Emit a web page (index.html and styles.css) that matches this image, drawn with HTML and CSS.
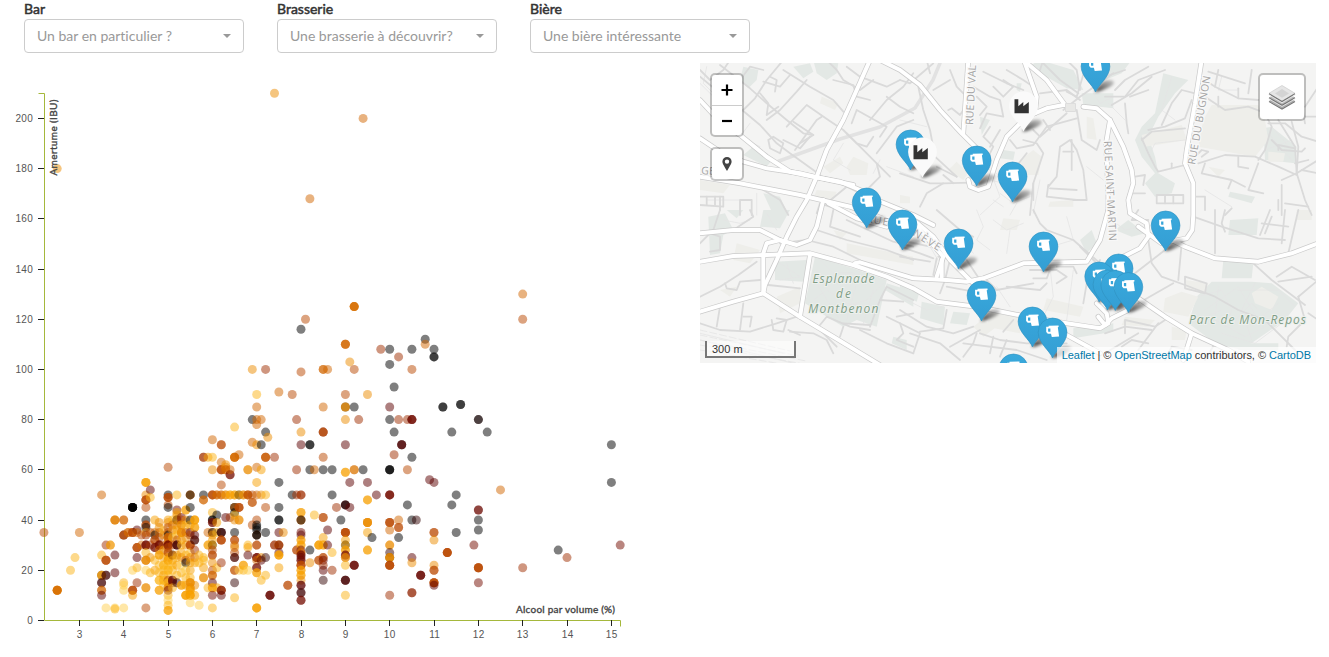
FILE: index.html
```html
<!DOCTYPE html>
<html lang="fr">
<head>
<meta charset="utf-8">
<title>Bières</title>
<link rel="stylesheet" href="styles.css">
</head>
<body>
<form class="filters">
  <div class="field"><label class="field-label">Bar</label><div class="select"><span>Un bar en particulier ?</span><i class="caret"></i></div></div>
  <div class="field"><label class="field-label">Brasserie</label><div class="select"><span>Une brasserie à découvrir?</span><i class="caret"></i></div></div>
  <div class="field"><label class="field-label">Bière</label><div class="select"><span>Une bière intéressante</span><i class="caret"></i></div></div>
</form>
<main class="content">
  <svg class="chart" id="chart" width="700" height="594" viewBox="0 63 700 594"></svg>
  <section class="map">
    <svg class="map-canvas" width="616" height="300" viewBox="700 63 616 300">
      <defs>
        <linearGradient id="pinFill" x1="0" y1="0" x2="0" y2="1"><stop offset="0" stop-color="#39a9dc"/><stop offset="1" stop-color="#349ed4"/></linearGradient>
        <linearGradient id="shade" x1="0" y1="1" x2="1" y2="0"><stop offset="0" stop-color="#000" stop-opacity=".75"/><stop offset="1" stop-color="#000" stop-opacity=".15"/></linearGradient>
        <filter id="soft" x="-40%" y="-60%" width="180%" height="220%"><feGaussianBlur stdDeviation="1.5"/></filter>
        <path id="pin" d="M0 0C-2.500-7-14.400-15-14.400-25.600A14.400 14.400 0 0 1 14.400-25.600C14.400-15 2.500-7 0 0Z"/>
        <path id="shadow" d="M-1 0C3-6 6-12 14-12C20-12 20-8 14-5C8-2 3 0-1 0Z"/>
        <g id="mug" fill="#fff"><path d="M-4-32.300L6-32.600V-31L5.200-30.800L6.500-21.400L-.8-21L-1.600-24.200L-4.800-24.300L-6.400-26V-31.300L-4-31.300ZM-4.500-29.400V-26.600L-3.800-26.200L-2.200-26.200V-29.400Z" fill-rule="evenodd"/></g>
        <path id="factory" fill="#333" d="M-9-32.300H-5.200V-25.200L-.2-29.600V-25.200L5.300-29.600V-18.200H-9Z"/>
      </defs>
      <rect x="700" y="63" width="616" height="300" fill="#f4f4f3"/>
      <g id="areas"></g>
      <g id="minor"></g>
      <g id="casing"></g>
      <g id="major"></g>
      <g class="street">
        <text transform="translate(973 125) rotate(-87)" textLength="60" lengthAdjust="spacingAndGlyphs">RUE DU VAL</text>
        <text transform="translate(1104 141) rotate(87)" textLength="100">RUE SAINT-MARTIN</text>
        <text transform="translate(1195 165) rotate(-80)" textLength="90">RUE DU BUGNON</text>
        <text transform="translate(866 222) rotate(10)" textLength="22">RUE</text>
        <text transform="translate(906 231) rotate(32)" textLength="38">ENÈVE</text>
        <text transform="translate(701 174) rotate(4)" textLength="40">GENÈVE</text>
      </g>
      <g class="place" text-anchor="middle">
        <text x="843.500" y="282.500" textLength="62">Esplanade</text><text x="843.500" y="297.500" textLength="15">de</text><text x="843.300" y="312.500" textLength="70">Montbenon</text>
        <text x="1247.500" y="323.500" textLength="117">Parc de Mon-Repos</text>
      </g>
      <g id="pins"></g>
    </svg>
    <div class="controls-left">
      <div class="bar zoom"><a><svg width="12" height="12"><path d="M6 .5v11M.5 6h11" stroke="#000" stroke-width="2.200"/></svg></a><a><svg width="12" height="12"><path d="M1 6h10" stroke="#000" stroke-width="2.200"/></svg></a></div>
      <div class="bar"><a><svg width="12" height="16"><path fill="#444" fill-rule="evenodd" d="M6 1a4.600 4.600 0 0 1 4.600 4.600c0 2-1 3.500-4.600 9.400C2.400 9.100 1.400 7.600 1.400 5.600A4.600 4.600 0 0 1 6 1zm0 2.400a2.200 2.200 0 1 0 0 4.400 2.200 2.200 0 0 0 0-4.400z"/></svg></a></div>
    </div>
    <div class="bar layers"><svg width="28" height="28"><path d="M1 18l13-7.500L27 18l-13 7.500z" fill="#aaa"/><path d="M1 14.500L14 7l13 7.500L14 22.500z" fill="#bbb"/><path d="M1 10.300L14 2.500l13 7.800-13 8z" fill="#e6e6e6" stroke="#ccc" stroke-width=".7"/><path d="M7 10.500L14 6l7 4.500-7 4.300z" fill="#d4d4d4"/><path d="M1 10.800L14 18.500l13-7.700M1 14.800L14 22.300l13-7.500M1 18.500l13 7.500 13-7.500" fill="none" stroke="#777" stroke-width="1.100"/><path d="M1 12L14 19.800 27 12M1 16l13 7.500L27 16" fill="none" stroke="#eee" stroke-width=".8"/></svg></div>
    <div class="scale">300 m</div>
    <div class="attribution"><a>Leaflet</a> | © <a>OpenStreetMap</a> contributors, © <a>CartoDB</a></div>
  </section>
</main>
<script src="app.js"></script>
</body>
</html>
```

FILE: styles.css
```css
body { margin: 0; width: 1329px; height: 657px; overflow: hidden; background: #fff; color: #333; font: 14px/20px Lato, sans-serif; font-variant-ligatures: none; }
.filters { display: flex; gap: 33px; height: 63px; padding-left: 24px; box-sizing: border-box; }
.field { width: 220px; }
.field-label { display: block; height: 19px; line-height: 18px; -webkit-text-stroke: .5px #333; }
.select { display: flex; align-items: center; justify-content: space-between; height: 34px; box-sizing: border-box; padding: 0 12px; border: 1px solid #ccc; border-radius: 4px; color: #999; }
.caret { border: 4px solid transparent; border-top-color: #999; border-bottom: 0; }
.content { display: flex; align-items: flex-start; }
.chart { display: block; flex: none; }
.chart .axis { fill: none; stroke: #a5b83b; }
.chart .tick { stroke: #222; }
.chart .tick-label { font: 10px "Liberation Sans", sans-serif; fill: #555; letter-spacing: .3px; }
.chart .title { font: 10px Lato, sans-serif; fill: #444; stroke: #444; stroke-width: .35px; }
.chart .dot { fill-opacity: .5; }
.map { position: relative; width: 616px; height: 300px; overflow: hidden; }
.map-canvas { display: block; }
.area { fill: #eeeeea; }
.area.park { fill: #e3e8e5; }
.road { fill: none; stroke-linejoin: round; stroke-linecap: round; }
.road.lane { stroke: #dadada; stroke-width: 1.8; }
.road.path { stroke: #e5e5e5; stroke-width: .8; }
.road.rail { stroke: #e2e2e2; stroke-width: 3.5; }
.road.case { stroke: #cacaca; stroke-width: 5.4; }
.road.fill { stroke: #fff; stroke-width: 4; }
.street { font: 10.5px "Open Sans", sans-serif; fill: #a4a4a4; stroke: #f8f8f8; stroke-width: 2.5px; paint-order: stroke; }
.place { font: italic 500 12px "Open Sans", sans-serif; fill: #7f9d86; stroke: #edf0ed; stroke-width: 2px; paint-order: stroke; }
.bar { width: 30px; border: 2px solid rgba(0,0,0,.22); border-radius: 5px; background: #fff; background-clip: padding-box; }
.bar a { display: flex; align-items: center; justify-content: center; height: 30px; }
.zoom a:first-child { border-bottom: 1px solid #ccc; }
.zoom a:last-child { height: 29px; }
.controls-left { position: absolute; left: 10px; top: 10px; display: flex; flex-direction: column; gap: 10px; }
.layers { position: absolute; right: 10px; top: 10px; width: 44px; height: 44px; display: flex; align-items: center; justify-content: center; }
.scale { position: absolute; left: 5px; bottom: 5px; width: 91px; height: 17px; box-sizing: border-box; padding-left: 5px; border: 2px solid #777; border-top: 0; background: rgba(255,255,255,.5); font: 11px/16px "Liberation Sans", sans-serif; }
.attribution { position: absolute; right: 0; bottom: 0; height: 16px; padding: 0 5px; background: rgba(255,255,255,.7); font: 11px/16px "Liberation Sans", sans-serif; letter-spacing: -.03px; white-space: nowrap; }
.attribution a { color: #0078a8; }
```

FILE: app.js
```js
const NS = 'http://www.w3.org/2000/svg';
function add(parent, tag, attrs, text) {
  const el = document.createElementNS(NS, tag);
  for (const k in attrs) el.setAttribute(k, attrs[k]);
  if (text !== undefined) el.textContent = text;
  parent.appendChild(el);
  return el;
}

/* Scatter plot: colour letters run from pale (Y) to black (k), a digit repeats the beer. */
const colours = { Y: '#ffd050', y: '#fbb317', a: '#f8a000', g: '#eb8c00', o: '#d16500', c: '#b94700', r: '#9f2d00', b: '#730b00', m: '#5b0000', d: '#350505', k: '#000' };
const beers = `
2.2:35c
2.5:180g 12g3 12o2
2.8:20y
2.9:25y
3:35o
3.5:50o 26y 18d 18a2 15m 15d 12o2 10m
3.6:30r 24c3 18m 18d 5Y
3.7:30y 30g
3.8:40a2 40o 26m 19m 5Y 4.5y
4:40o2 34d 34c2 15y 14Y 12Y 5Y
4.1:35o2
4.2:45k6 35c3 20Y 12c3 10a
4.3:36m 35o 29c3 25m 21y 15r
4.4:34c 30o
4.5:55a3 50g 48c3 45c 40k 38c2 37k 35g 34r 30b3 27y 24o2 24a 20Y 13g2 5c
4.6:52m 49y 35c 30r 25g 19y
4.7:40a 35o 34k 32c2 29b2 24y 20a
4.8:39g 37g 35o 33c 30b3 28o 26a2 22y 19y 16y2 12a2
4.9:36y 34g 30c 28a 25a 22y2 20y 18a 16y2 14y
5:61c 50k 49c3 46c 45k 40a 39g 37c 35c 34k 33o3 31o2 30b3 29c 27c2 25a 24a2 22y 20y2 18y 16c 15y2 13g2 12b 10y 8Y 6y 4a2
5.1:40y 38o 36g 33y 30c 26k 26o 24a 22y 20y 16m2 15b 13y
5.2:50y 44b 42g 43a 40k 40g 38g 36a 34y 32c 30m2 30d 26g 25y 22a 18y 15d
5.3:41b 40r 38g2 35g3 32a 30y 27a 25g 22Y 19y 14a2
5.4:44a2 40g 38y 35o 33g 30g 26y 24c 23k 20Y 17y 14a 10a3
5.5:50o2 50k 45k 40k 38a 35m 34c 30c3 27y 25g 23a 20a 17y 15g3 13g2 12a2 10a3 7Y
5.6:40a3 37a2 34m 32k 32b 28r 25o 23a 14g 10a
5.7:26y 23y 6Y
5.8:65b 65c 50k 48o2 25y 24y 21a 17g2
5.9:65a 35o 30a2 13y
6:72o 65y 60g 50c3 43y 40k2 39b2 35o 35k 34g 32a 30k 30a 28c 26c2 23g 20c 18o2 15m 13a2 10b 5y
6.1:50o2 42k 39a 35y 21y 13a
6.2:70c2 63o 60c3 54c 50o2 35d3 32c3 23r 12c2 12b 10m
6.3:62g 61g 60o2 50g2 41m
6.4:58b2 60o 50a2 41r
6.5:77y 65a 65o3 50a2 45k2 45o 43k 42y 40g 35k 32c2 30o 29g 27c 25k 25b 20r 20o 15d 9y
6.6:66o 50k 50a 45c3 40o 40a 20Y
6.7:50g2 22a2 20y
6.8:60o 60a 50o2 50c 30y 29a 26m 20Y
6.9:80k 71o 50c 47o 47c 38c
6.9:100g
7:90y 85o 80o 78o 70g 61o 55a 50o 40c 38k 37k 36k 34c 34k2 30c2 25b3 24o 21b2 19a2 5a3
7.1:80o 70k 60a 50g 25g 24m 16y
7.2:100r 75k 65c2 65o 50y 45c 35k 25d 18y
7.25:73g
7.3:10b2 10m
7.4:65r 30r2
7.4:210g
7.5:91o 55k 45k 40k2 35m 30o2 30b 27m 26a3 21a
7.6:35g
7.7:14c2
7.8:90c 50k
7.9:80r 60r 50r 28c2
8:116k 99c 75g 70m 50r2 43a2 40o2 40k 35b 34m 32a2 30a2 28b 27o2 26b2 25m 24b2 22c3 20a2 18a2 16g 14m2 11m 11d 8b2
8.1:120c
8.2:168o 70k2 60k 28k 23g
8.3:60o 42y
8.4:30a3 24c2
8.5:100o2 85o 75b 75c2 65c 60k 41c2 33a 30a2 25c2 24b 22r 20m 16d
8.6:100o 36m 30m
8.7:60k 50k 27y 20r
8.8:45r
8.9:40k
9:110o3 90c 85k 85g2 80g 70m 59a2 46m2 46k 35c4 32a 30k 30a 28a2 26b2 25c 25a 22y 16m2 16d 10y
9.1:103g 55m 45m
9.2:125g2 125o2 100c 85k 60c 60g 22b2 22m
9.3:80r
9.4:200o 60k
9.5:90g 55m 48a2 39g4 35a 28a2
9.6:33k
9.7:50m
9.8:108r
10:108k 102k 85m 80k 60k3 50b3 39c3 36o 30g2 27d 25k 25g3 22c4 10r
10.1:93k 75k 66r
10.2:105r 80r 40o 37c2 33k
10.27:70d2 70m
10.4:80r 60c 46k
10.5:108k 100c 80m 80b2 65k 40k 25m 23g 11b 11r
10.6:40d
10.7:18b2 18m
10.8:112k 110o
10.9:56m
11:108k 105k2 55m 35c2 32g 22g 20c2 15c4 14m
11.2:85k2
11.3:27c4
11.4:75k 46k
11.5:50k 35k
11.6:86k2
11.9:30b
12:80d 80k 44m 44b 40k 36k 21c4 15b
12.2:75k
12.5:52o
13:130o 120c 21r
13.8:28k
14:25r
15:70k 55k
15.2:30b`;
const X = v => 79.4 + (v - 3) * 44.33, Y = v => 620.4 - v * 2.51;
const chart = document.getElementById('chart');
add(chart, 'path', { class: 'axis', d: 'M38.5 93.500H44.500V620.500H620.500V626.500' });
for (let v = 0; v <= 200; v += 20) {
  const y = Math.floor(Y(v)) + .5;
  add(chart, 'path', { class: 'tick', d: `M38 ${y}h6` });
  add(chart, 'text', { class: 'tick-label', x: 33, y: y + 3.500, 'text-anchor': 'end' }, v);
}
for (let v = 3; v <= 15; v++) {
  const x = Math.floor(X(v)) + .5;
  add(chart, 'path', { class: 'tick', d: `M${x} 620v6` });
  add(chart, 'text', { class: 'tick-label', x: x + .2, y: 638, 'text-anchor': 'middle' }, v);
}
for (const line of beers.trim().split('\n')) {
  const [abv, list] = line.split(':');
  for (const m of list.matchAll(/([\d.]+)([a-zA-Z])(\d?)/g))
    for (let i = 0; i < (m[3] || 1); i++)
      add(chart, 'circle', { class: 'dot', cx: X(+abv).toFixed(1), cy: Y(+m[1]).toFixed(1), r: 4.5, fill: colours[m[2]] });
}
add(chart, 'text', { class: 'title', x: 516, y: 613, textLength: 99 }, 'Alcool par volume (%)');
add(chart, 'text', { class: 'title', transform: 'translate(57 175.500) rotate(-90)', textLength: 76 }, 'Amertume (IBU)');

/* Map tiles: geometry in thirds of a pixel from each tile's origin. */
const tiles = { A: [700, 60], B: [700, 210], C: [900, 60], D: [900, 210], E: [1105, 60], F: [1105, 210] };
function pathOf(tile, pts) {
  const [ox, oy] = tiles[tile];
  return 'M' + pts.trim().split(' ').map(p => { const [x, y] = p.split(','); return (ox + x / 3).toFixed(1) + ' ' + (oy + y / 3).toFixed(1); }).join('L');
}
function each(src, fn) { src.trim().split('\n').forEach(l => { const t = l[0]; l.slice(2).split('|').forEach(p => fn(t, p)); }); }
const parks = `
A 130,20 175,30 170,60 145,85 120,60|280,20 330,10 340,35 310,55|340,0 415,10 410,40 380,60 350,40|130,285 165,255 220,295 200,320|190,400 240,410 265,465 220,465
B 25,20 75,10 100,60 70,75 60,130 30,135|80,0 130,0 110,25|190,0 270,0 240,55 180,50|225,155 320,150 310,215 225,210|345,140 460,175 560,210 530,350 470,330 430,350 315,280|560,220 640,245 640,290 555,240|580,380 620,390 620,420 575,400
C 350,70 365,70 360,95 350,90|240,170 270,180 245,225|545,100 640,100 640,145 550,135|385,20 420,0 520,30 550,90 500,85|310,270 345,275 340,300 300,295
D 65,275 135,290 130,345 60,325|0,215 60,240 50,275 0,250|520,355 640,340 640,365 520,385|160,305 210,310 200,345 150,340|540,90 575,60 590,100 560,130
E 175,40 250,60 210,100 160,170 130,230 150,290 160,340 210,370 200,400 150,410 120,370 150,340 110,290 90,240 110,200 150,160|475,205 500,200 575,260 570,310 480,300|375,395 450,410 440,430 370,410|0,0 80,0 50,40 0,60
F 355,150 445,160 440,205 350,205|275,260 320,215 440,215 500,220 580,280 540,330 410,420 330,400 250,340|375,30 460,25 455,75 370,75|30,60 70,30 120,70 80,80|400,400 520,400 520,420 400,420`;
const blocks = `
A 365,110 415,130 405,150 360,130|370,320 420,290 430,310 390,340|440,320 460,290 505,310 500,345 450,345|350,390 410,395 400,420 340,415|0,360 90,375 70,400 0,390
B 230,260 300,230 300,280 240,310|110,100 180,120 150,160 100,150|60,240 110,230 90,260|400,60 440,70 420,90|440,100 640,140 640,165 440,130
C 360,300 400,270 425,290 415,345 360,345|145,330 170,305 205,340 190,360|450,425 520,420 520,440 445,440|560,170 580,175 590,240 560,235|0,405 30,410 30,430 0,430
D 275,300 365,325 360,370 260,350|220,350 245,330 290,350 250,380|440,265 550,290 540,320 430,300|310,25 360,30 350,60 300,60
E 295,180 320,135 460,135 480,180 490,240 450,290 280,260|110,225 230,195 245,240 120,260|490,275 540,280 535,305 490,305|310,320 360,330 340,350
F 180,265 230,245 280,260 250,320 175,305|240,210 310,220 300,250 245,240|200,350 245,360 240,390 200,390|440,250 470,230 520,260 500,300 450,280|60,320 150,330 130,350 50,345|575,0 620,0 620,30 575,30`;
const lanes = `
A 0,50 60,100 120,145 180,195 230,250 270,280 340,330 360,345|60,15 150,85 200,130 260,180 310,220 340,225|250,30 330,80 400,120 430,155|190,65 240,80 270,45|130,150 165,115 200,60 250,0|200,180 240,150 290,95 320,60|260,200 320,135 385,180 430,210 480,260 530,310 570,350|285,270 350,180 365,170|280,185 340,225 300,250|205,240 220,230 250,250 240,280 210,265 205,240|250,240 300,265 330,230|380,0 410,30 430,60 480,90 520,60|400,60 460,75 470,110 510,120|440,20 480,50 560,80 600,60|455,190 470,150 560,200 540,230|510,180 560,120 610,80 640,40|560,110 600,140 640,160|530,280 590,200 640,180|440,220 470,250 500,260 520,230|0,30 30,60 70,30 90,0|120,60 150,20 190,30|180,100 205,130 200,165 235,140|210,50 230,60 225,95|380,430 440,380 480,400|530,310 540,350 500,390|60,410 60,450|0,410 70,410 70,440 0,435|20,410 20,435|45,410 45,435|120,465 120,420 155,420 155,465|190,390 240,420 265,465|350,460 360,430 450,460
B 0,260 60,230 115,195 170,155|75,220 80,235 110,240 120,215 180,210|130,320 155,320 150,350|0,340 60,360 150,365 230,340 290,320|50,350 60,290|120,360 130,280|205,225 300,235|215,330 220,360 250,365 260,330 230,325|270,365 340,370 380,390 400,430|265,360 300,375|300,320 350,350 410,410|360,345 380,320 450,350 510,360|430,340 510,345|510,350 540,270 560,230 640,270|540,270 610,275|560,320 600,340 610,370 590,390 640,410|480,360 560,400 640,430|590,320 640,310|430,350 420,380|0,100 40,60 60,0|100,60 160,20 150,0|400,0 390,50 480,80|440,30 580,95 640,110|240,100 320,90 400,110 480,150|350,60 440,90 560,120 640,150|30,70 60,80 60,120 30,125
C 55,80 70,150 90,210 105,290 170,350|0,60 30,70 100,10|80,0 90,40|150,30 170,80 190,100|145,150 155,145 180,165 190,150|220,80 270,110 300,120 310,170 260,160 240,205|230,110 260,140 240,165|310,60 340,80 310,110 280,80|250,35 320,70 370,90|320,30 370,60 400,80|270,200 250,230 280,260 250,320|300,210 270,260|330,240 350,265 400,255 440,200 530,175|370,240 410,250 430,280 400,370 400,420|340,330 380,280|400,210 420,230 500,160|430,180 450,210|0,340 90,370 130,370|60,440 80,400 130,370 210,368|110,320 170,350|130,345 160,370|445,380 470,350 480,260 510,240 530,270 550,330 560,420 520,420|445,375 440,410 530,420|450,385 530,390|520,275 490,275|515,240 515,330|530,150 545,240 590,270 600,240|400,370 390,465|490,150 540,110 640,40|420,100 500,90 540,120|540,90 530,30 500,0|420,0 480,60 535,100|500,95 530,110 560,10|0,230 60,250|430,0 420,30|100,90 150,60
D 110,0 180,60 220,80|200,150 240,210|180,170 220,220|110,145 100,195|130,140 130,210|115,140 135,145|150,150 135,210 120,250|140,230 220,245 250,250|250,200 290,240 400,220|390,180 470,180 500,200 470,220|400,205 440,205 450,180|470,170 520,170 530,190|400,0 420,40 440,60 520,90 600,160|540,110 600,170 640,190|550,280 560,220 600,150|240,370 300,390 380,400 500,400|190,400 350,420 440,450|230,370 220,400 190,440|150,410 240,360|280,380 270,430|320,390 300,440|30,370 120,400 180,450|0,300 80,350 160,370 220,350|0,340 60,370 40,430|60,365 130,355 140,300|490,400 440,390|340,330 310,365|320,230 420,240 440,220|0,110 60,130 100,145|0,140 90,155|0,90 90,110
E 30,90 60,60 130,20|0,110 60,110 100,60 180,30|20,135 80,100 140,50|60,130 65,190 70,220|0,50 60,30|75,110 130,90|130,210 180,200 240,175 260,120|170,195 200,130 230,90 270,100|110,235 130,280 150,320 160,335 240,315|110,240 140,215 240,205|200,325 200,310|300,110 360,150 430,140 470,155|300,60 330,80 400,115 460,120|340,110 340,140|330,80 340,30|440,30 430,100|310,35 420,70|400,85 400,115|480,160 500,200 480,270 460,300|280,310 360,285 450,290 520,320 575,345|260,300 290,270 310,275 290,290|300,310 290,340 380,360 420,380|400,290 400,320 430,325|380,360 370,385|460,310 430,390 475,400|500,240 530,270 590,275 600,265|520,270 520,255 570,265|490,190 540,190 590,230 640,245|520,180 570,260 575,340|570,310 610,300|570,170 640,170|560,185 580,260 575,340 600,420 620,465|530,375 530,465|530,360 575,340 640,300|590,330 640,340|155,405 235,405 235,430 155,430 155,405|180,405 180,430|205,405 205,430|90,350 120,345 115,375|80,400 120,400|270,410 300,410 300,450|520,420 520,450|360,465 380,445|540,430 610,440|600,140 640,80|590,130 600,190
F 265,20 350,50 460,85 540,90|330,0 330,130|360,0 350,40 360,65|495,0 465,75|540,0 530,100|580,0 550,130|470,40 550,50|500,20 480,70|100,0 80,30 130,30|130,90 140,160 170,200 240,225 330,260 400,300 480,330 570,420|90,190 180,120|205,220 100,280|230,100 220,210|240,200 305,220 300,250 240,235 240,200|445,160 500,210 600,285|580,260 640,210|515,200 560,170 630,210|520,215 620,200|580,260 600,330 550,380 545,410|60,370 60,330 150,350 180,330|0,370 60,350 140,360|100,420 160,340|130,400 80,390 50,410|0,430 100,370|180,450 200,410 260,420|300,450 330,400|610,310 640,330`;
const thin = `
A 0,70 50,120 100,190|20,20 10,70 50,110|150,190 120,230 180,260|430,250 400,300 450,330|540,300 520,340|20,420 120,420|170,400 170,465|560,320 640,350
B 240,160 300,200 240,210|360,150 400,190 460,190 520,220|340,270 380,240 440,280 500,290|350,220 420,330|400,300 500,270 550,220|480,180 440,330|0,370 250,430|0,390 280,460|70,30 120,40 150,30|200,10 230,60|260,160 280,220|520,240 490,340
C 200,280 270,330 300,410 240,465|270,360 310,370 290,340|0,180 80,200|300,400 340,430 390,410|330,465 350,430|420,360 400,460|580,100 600,130 640,110|560,320 610,360|280,420 310,440
D 230,0 250,50 230,90 270,120|280,30 320,60 370,40|330,60 320,130|420,120 520,90|290,230 330,290|450,170 460,260 430,320|520,180 500,330|0,260 80,300 130,290|170,70 220,130|60,60 120,160|500,20 520,90
E 130,290 150,250 240,240|200,50 170,150 210,180|350,50 340,90 400,90|500,200 560,270|480,270 560,240|490,220 560,300|300,390 380,440|10,130 60,180
F 280,260 350,240 380,300 360,350|300,300 400,230 460,330 520,280|340,230 330,330 420,380 480,350|400,240 520,240 570,290|390,330 440,280 500,340|350,370 450,400 530,340|280,330 350,300|450,220 410,300 440,390|20,30 60,60 100,50`;
const majors = `
A 0,120 60,185 120,225 200,290 270,335 340,350 420,365 480,390 530,420 640,465 700,495|0,235 60,275 130,305 200,325 300,340 350,352 460,375|510,0 470,90 430,180 380,270 350,350 320,420 290,470 260,530 230,600 195,675 190,700|540,0 600,30 660,75 720,150 785,220 830,265|0,350 120,370 300,405 450,440 560,480
B 0,155 100,138 200,135 330,130 460,165 560,200 640,235 710,275 830,290 980,320 1100,340 1200,355 1225,340 1220,310 1190,280|465,160 480,157 640,205 740,210 800,215 850,205 970,160 1160,155 1200,90 1225,0|330,135 300,320|0,305 100,275 190,250 300,320 400,380 540,465|190,250 190,130 200,100 240,90 290,105 330,90 350,50 370,-30|0,70 100,60 180,60 250,95|385,-20 470,25 560,50
C 205,0 190,220|370,0 440,60 495,135|375,10 410,110 405,160|490,135 440,145 380,170 320,230 290,300 265,380 235,390 210,380 205,360|550,140 590,145 630,180 645,210 670,260 695,330 700,370 685,420 690,460 715,475 740,490 745,530 720,565 650,600|630,180 618,250 625,400 625,450
D 30,20 100,80 150,150 220,220|0,0 60,60 130,140 110,200|500,375 600,430|125,150 125,200
E 290,0 270,130 245,270 240,310 265,370 265,465 262,510 245,535 170,550 100,500
F 170,75 240,110 330,145 460,155 560,130 640,100|100,265 180,320 260,370 370,420 430,455|260,370 235,450|70,300 20,325 0,345 -20,320`;
const g = id => document.getElementById(id);
each(parks, (t, p) => add(g('areas'), 'path', { class: 'area park', d: pathOf(t, p) + 'Z' }));
each(blocks, (t, p) => add(g('areas'), 'path', { class: 'area', d: pathOf(t, p) + 'Z' }));
add(g('areas'), 'path', { class: 'road rail', d: 'M779 161L840 139L880 127L915 108L933 80L940 63' });
each(thin, (t, p) => add(g('minor'), 'path', { class: 'road path', d: pathOf(t, p) }));
each(lanes, (t, p) => add(g('minor'), 'path', { class: 'road lane', d: pathOf(t, p) }));
for (let i = 0; i < 5; i++) add(g('minor'), 'path', { 'stroke-dasharray': '7 3', class: 'road path', d: `M700 ${330 + i * 5}L${790 + i * 8} ${351 + i * 5}` });
each(majors, (t, p) => {
  add(g('casing'), 'path', { class: 'road case', d: pathOf(t, p) });
  add(g('major'), 'path', { class: 'road fill', d: pathOf(t, p) });
});
add(g('major'), 'path', { fill: '#e8e8e6', stroke: '#ddd', d: 'M1065.500 103.500h10v8h-10z' });

const bars = [[1095.500, 92], [910.500, 170], [976.700, 186], [1012.600, 202], [866.700, 228], [902.500, 250], [1165.600, 251], [958.600, 269], [1043.500, 272], [1118.600, 294], [1099.200, 302], [1107.500, 310], [1115.300, 310.500], [1128.400, 312.500], [981.500, 321], [1032.500, 347], [1052.600, 358], [1013.500, 394]];
const breweries = [[1023.500, 131.500], [922.500, 177.500]];
const all = bars.map(b => [...b, 'mug']).concat(breweries.map(b => [...b, 'factory'])).sort((p, q) => p[1] - q[1]);
for (const [x, y] of all) add(g('pins'), 'use', { href: '#shadow', transform: `translate(${x} ${y})`, fill: 'url(#shade)', filter: 'url(#soft)' });
for (const [x, y, icon] of all) {
  const pin = add(g('pins'), 'g', { transform: `translate(${x} ${y})` });
  add(pin, 'use', { href: '#pin', fill: icon === 'mug' ? 'url(#pinFill)' : '#fafafa', stroke: icon === 'mug' ? '#2f90c0' : 'none', 'stroke-width': .6 });
  add(pin, 'use', { href: '#' + icon });
}
```
